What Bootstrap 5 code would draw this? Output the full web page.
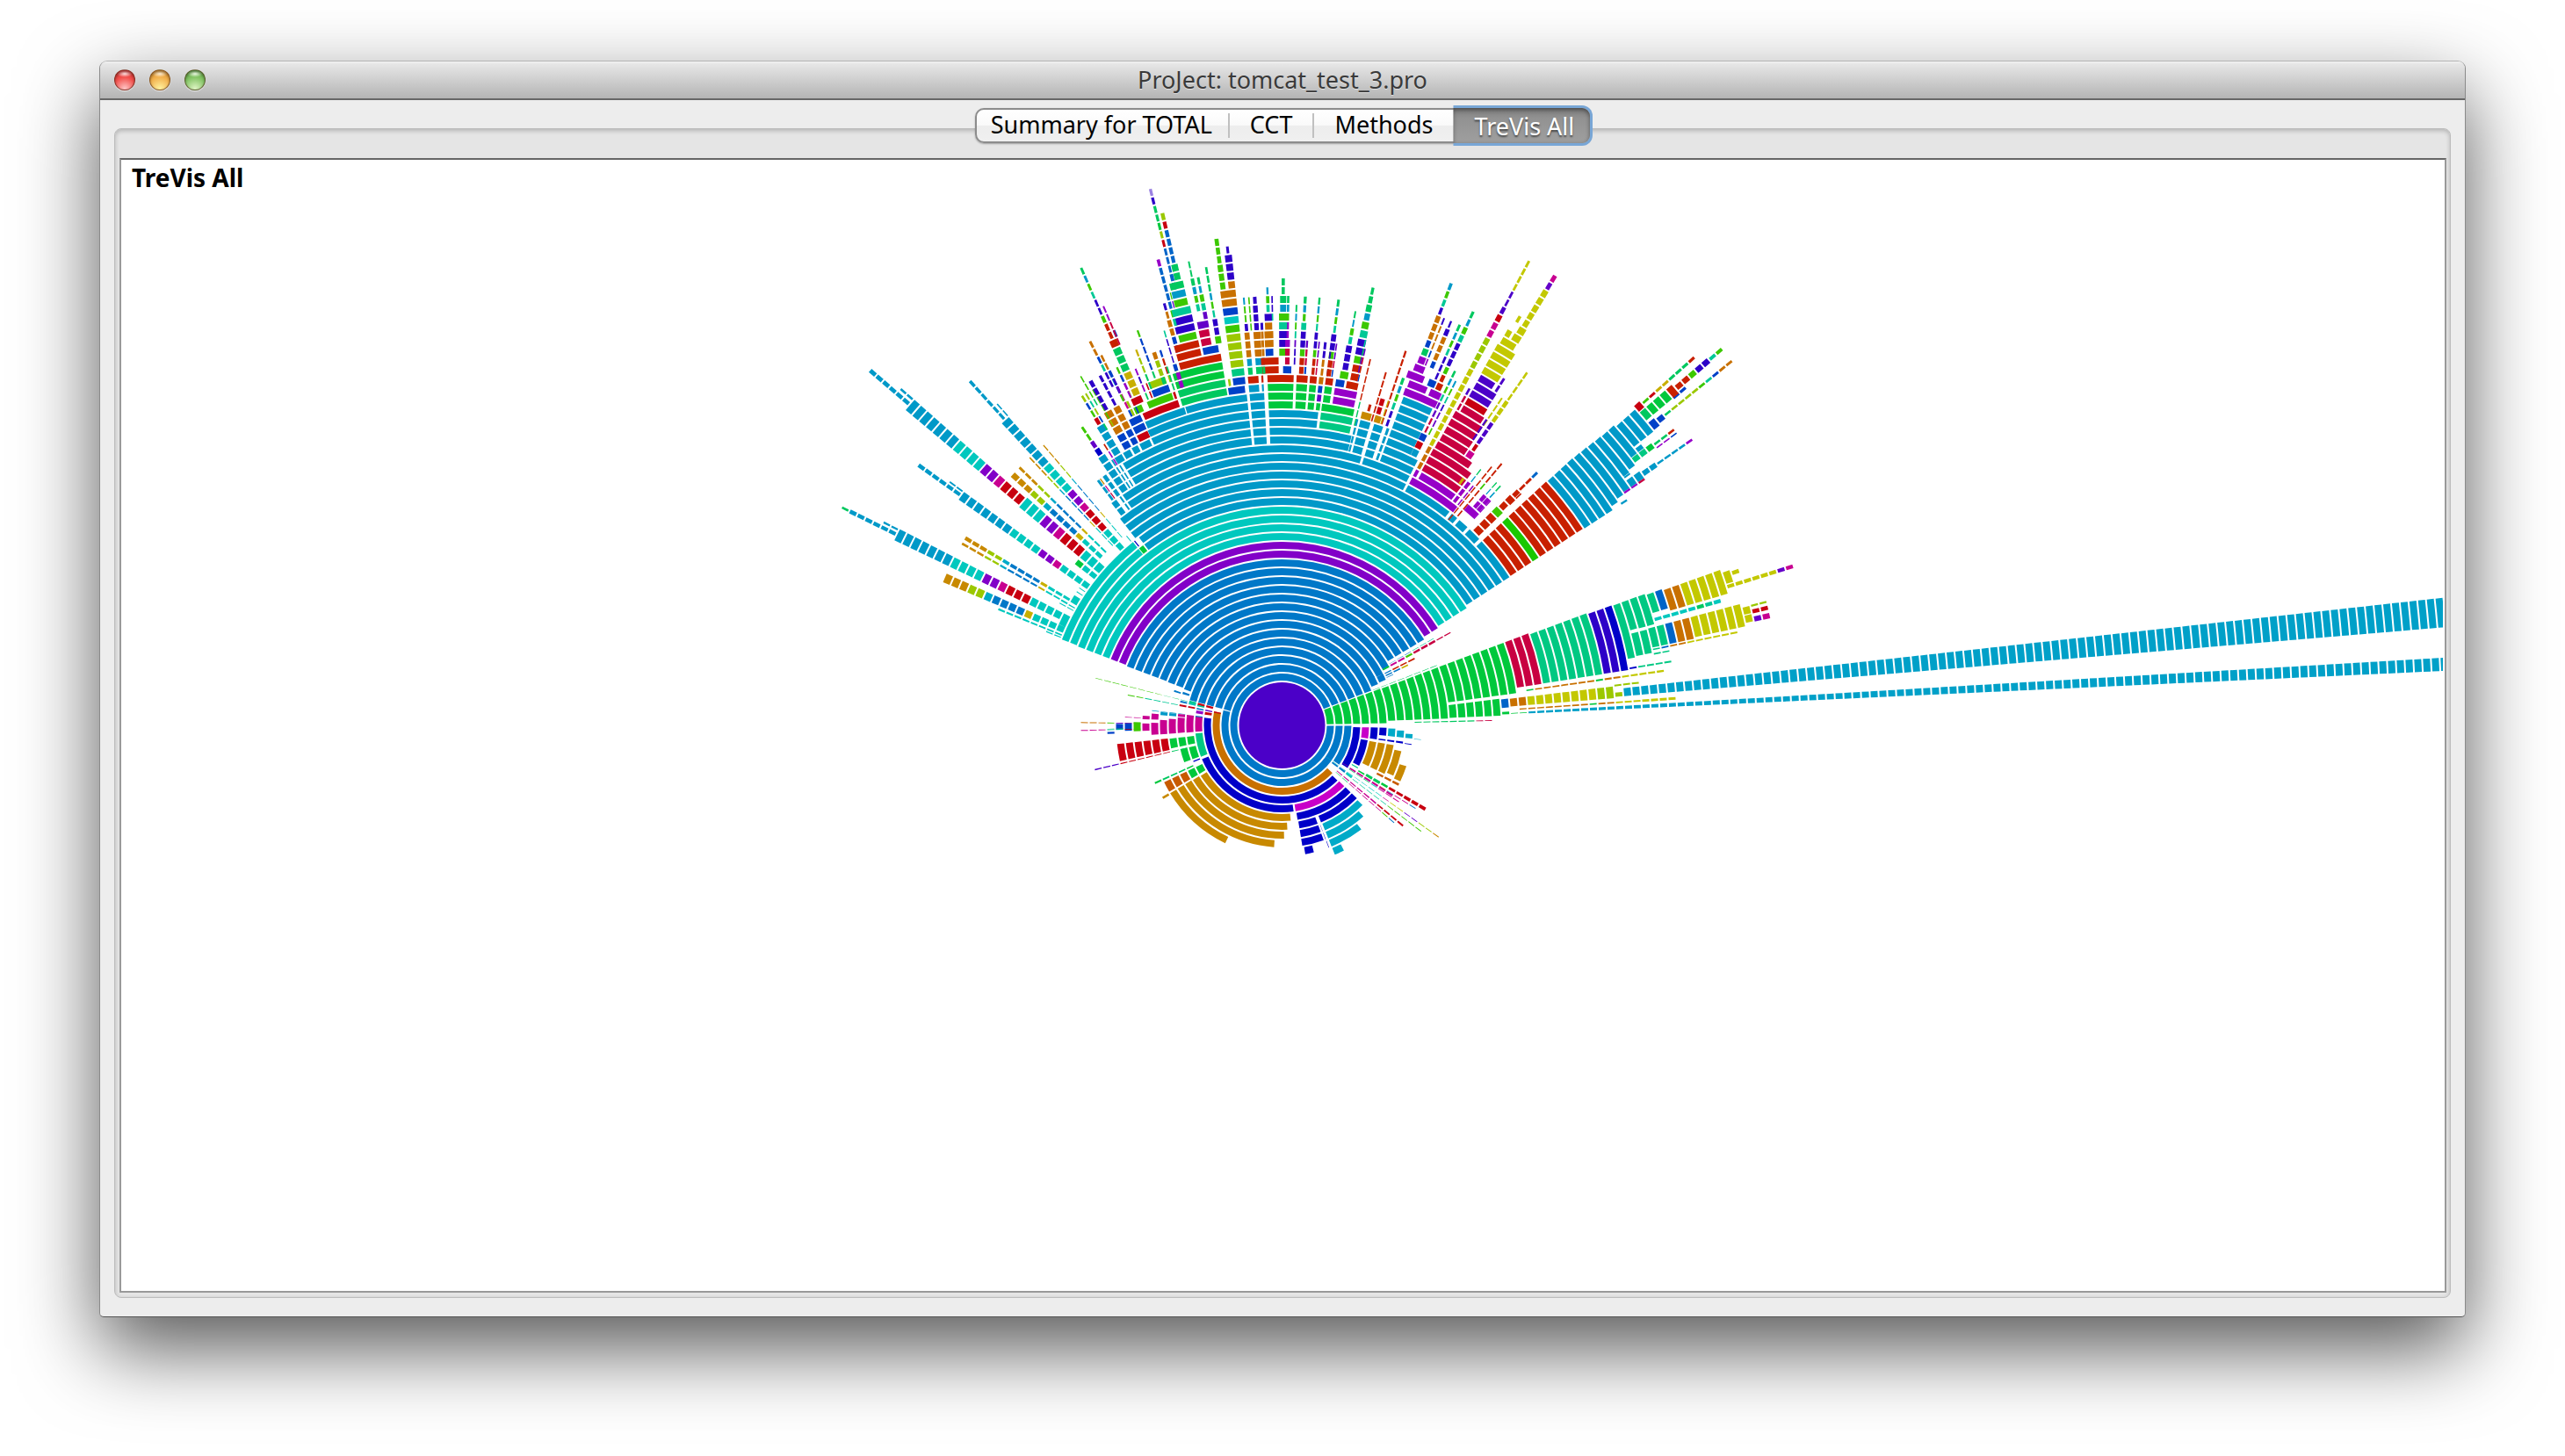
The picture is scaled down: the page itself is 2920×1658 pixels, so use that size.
<!DOCTYPE html>
<html lang="en">
<head>
<meta charset="utf-8">
<meta name="viewport" content="width=device-width, initial-scale=1">
<title>ProJect: tomcat_test_3.pro</title>
<link href="https://cdn.jsdelivr.net/npm/bootstrap@5.3.0/dist/css/bootstrap.min.css" rel="stylesheet">
<style>
body { font-family: "Noto Sans", "Open Sans", sans-serif; font-size: 27px; line-height: 36px; color: #000; background: #fff; }
.desktop-area { min-height: 100vh; padding: 69px 113px 158px; overflow: hidden; }
.app-window { background: #ededed; border: 1px solid #8a8a8a; border-top-color: #b4b4b4; border-bottom-color: #555; border-radius: 9px 9px 5px 5px; box-shadow: 0 36px 90px rgba(0,0,0,.66); }
.title-bar { height: 44px; padding: 0 16px; background: linear-gradient(#f2f2f2 0, #e6e6e6 3px, #b4b4b4 100%); border-bottom: 2px solid #666; border-radius: 8px 8px 0 0; display: grid; grid-template-columns: 1fr auto 1fr; }
.title-text { font-size: 27px; line-height: 36px; font-weight: 400; color: #3a3a3a; text-shadow: 0 1px 0 rgba(255,255,255,.5); }
.light { width: 24px; height: 24px; border-radius: 50%; padding: 0; border: 1px solid rgba(60,20,0,.55); box-shadow: 0 1px 1px rgba(255,255,255,.7), inset 0 2px 3px rgba(0,0,0,.35); }
.light-close { background: radial-gradient(ellipse 9px 4px at 50% 18%, #ffe4e4, transparent), radial-gradient(circle at 50% 95%, #ffc6c6 0, #f2504c 55%, #d8312f 100%); }
.light-min { background: radial-gradient(ellipse 9px 4px at 50% 18%, #fff0d8, transparent), radial-gradient(circle at 50% 95%, #fff3a0 0, #f2b14e 55%, #d98b25 100%); }
.light-max { background: radial-gradient(ellipse 9px 4px at 50% 18%, #effbe6, transparent), radial-gradient(circle at 50% 95%, #dff5c4 0, #84c465 55%, #58a03c 100%); }
.window-body { padding: 9px 16px 21px; }
.tab-strip { position: relative; z-index: 2; margin-bottom: -17px; }
.seg { height: 40px; border: 2px solid #8c8c8c; border-radius: 10px; background: linear-gradient(#fff 0, #fafafa 48%, #ededed 52%, #f0f0f0 100%); box-shadow: 0 1px 2px rgba(0,0,0,.3); }
.seg .nav-link { font-size: 27px; line-height: 34px; padding: 0 18px 0 16px; color: #000; border: 0; background: none; border-radius: 0; position: relative; }
.seg .nav-item + .nav-item .nav-link:not(.active)::before { content: ""; position: absolute; left: 0; top: 4px; bottom: 2px; border-left: 2px solid #c0c0c0; }
.seg .tab-mid { padding: 0 23px 0 25px; }
.seg .nav-link.active { color: #fff; background: linear-gradient(#7d7d7d, #929292 30%, #9f9f9f); height: 40px; margin: -2px -2px 0 0; padding: 1px 18px 0 24px; border-radius: 0 9px 9px 0; text-shadow: 0 2px 2px rgba(0,0,0,.55); box-shadow: 0 0 0 3px #78a6d6, inset 0 2px 5px rgba(0,0,0,.45); clip-path: inset(-4px -4px -4px 0); }
.tab-panel { border: 1px solid #bcbcbc; border-radius: 8px; background: #e5e5e5; box-shadow: inset 0 2px 5px rgba(0,0,0,.22); padding: 33px 4px 5px 5px; }
.chart-frame { background: #fff; border: 2px solid #999; border-top-color: #666; padding-right: 2px; }
.chart-title { position: absolute; left: 12px; top: 2px; font-size: 28px; font-weight: 700; margin: 0; line-height: 36px; }
.chart-svg { position: absolute; inset: 0 2px 0 0; width: calc(100% - 2px); height: 100%; }
</style>
</head>
<body>
<main class="desktop-area d-flex">
  <div class="app-window d-flex flex-column flex-grow-1">
    <header class="title-bar align-items-center">
      <div class="d-flex" style="gap:16px">
        <button type="button" class="light light-close" aria-label="Close"></button>
        <button type="button" class="light light-min" aria-label="Minimize"></button>
        <button type="button" class="light light-max" aria-label="Zoom"></button>
      </div>
      <h1 class="title-text m-0">ProJect: tomcat_test_3.pro</h1>
      <span></span>
    </header>
    <div class="window-body d-flex flex-column flex-grow-1">
      <div class="tab-strip d-flex justify-content-center">
        <ul class="seg nav flex-nowrap" role="tablist">
          <li class="nav-item" role="presentation"><button type="button" class="nav-link" role="tab">Summary for TOTAL</button></li>
          <li class="nav-item" role="presentation"><button type="button" class="nav-link tab-mid" role="tab">CCT</button></li>
          <li class="nav-item" role="presentation"><button type="button" class="nav-link tab-mid" role="tab">Methods</button></li>
          <li class="nav-item" role="presentation"><button type="button" class="nav-link active" role="tab" aria-selected="true" aria-controls="trevis">TreVis All</button></li>
        </ul>
      </div>
      <section class="tab-panel d-flex flex-grow-1" id="trevis" role="tabpanel">
        <div class="chart-frame position-relative flex-grow-1">
          <svg class="chart-svg" role="img" aria-label="Calling context ring chart"><svg x="50%" y="50%" overflow="visible"><g id="rings"></g></svg></svg>
          <h2 class="chart-title">TreVis All</h2>
        </div>
      </section>
    </div>
  </div>
</main>
<script src="https://cdn.jsdelivr.net/npm/bootstrap@5.3.0/dist/js/bootstrap.bundle.min.js"></script>
<script>
const INK = { v:'#4b00c8', V:'#2d00c8', d:'#0000c8', D:'#0041c8', e:'#0064c8', B:'#0078c8', c:'#0099c8', C:'#00aac8',
  t:'#00c8be', T:'#00c896', j:'#00c882', G:'#00c85f', g:'#00c83c', L:'#3cc800', k:'#19c800', y:'#c3c800', Y:'#9bc800',
  h:'#c8af00', o:'#c88900', O:'#c87000', R:'#c82000', r:'#c80010', m:'#c80041', M:'#c80091', P:'#c800c8', p:'#9600c8',
  u:'#8200c8', w:'#6400c8', q:'#9b82e1', F:'#00a0c8', N:'#c85a00' };
const HUB = 50, STEP = 10, RAD = Math.PI / 180;
const byInk = {};
// one ring cell; angles in radians, counter-clockwise from east
function cell(a0, a1, ring, ink, inset) {
  const r0 = HUB + ring * STEP + 1, r1 = r0 + STEP - 2;
  const p = (r, a) => (r * Math.cos(a)).toFixed(2) + ' ' + (-r * Math.sin(a)).toFixed(2);
  const i0 = inset / r0, i1 = inset / r1, big = a1 - a0 > Math.PI ? 1 : 0;
  (byInk[ink] = byInk[ink] || []).push(`M${p(r0, a0 + i0)}A${r0} ${r0} 0 ${big} 0 ${p(r0, a1 - i0)}L${p(r1, a1 - i1)}A${r1} ${r1} 0 ${big} 1 ${p(r1, a0 + i1)}Z`);
}
function unroll(s) { return s.replace(/([A-Za-z])(\d+)/g, (_, c, n) => c.repeat(+n)); }
// bands: [from degrees, to degrees, first ring, inks outwards]
function bands(list) {
  for (const [a0, a1, k, s] of list) [...unroll(s)].forEach((c, i) => cell(a0 * RAD, a1 * RAD, k + i, c, .6));
}
// spikes: [tip x, tip y, width, inks inwards, width, inks, ...] on the sector's own grid, hub at (cx, cy)
function spikes(cx, cy, sx, sy, list) {
  for (const [x, y, ...parts] of list) {
    const dx = (x - cx) / sx, dy = (cy - y) / sy, a = Math.atan2(dy, dx);
    let k = Math.floor((Math.hypot(dx, dy) - HUB) / STEP);
    for (let i = 0; i < parts.length; i += 2) {
      const half = parts[i] / 6 / (HUB + STEP * (k + .5));
      for (const c of unroll(parts[i + 1])) cell(a - half, a + half, k--, c, 0);
    }
  }
}
bands([
  [21,360,0,'B'],[21,165,1,'B5'],[165,360,1,'B'],[23,160,6,'B'],[27.5,159.5,7,'B'],[28.5,159.5,8,'B'],[31,159.3,9,'B5'],
  [23.5,26.8,7,'B'],[31.8,159,14,'u2'],[32.3,159,16,'t4'],[129,158.8,20,'t2'],[33,127.4,20,'c2'],[33,128.2,22,'c3'],
  [-35,0,2,'B'],[168,317,2,'O'],[174,315.5,3,'d'],[-33.5,-1,3,'d'],
  [185,201.5,4,'j'],[202.5,278,4,'d'],[278.6,316,4,'P'],
  [211.5,275.5,5,'o'],[211.2,273.2,6,'o'],[211,271.3,7,'o'],[211,266.5,8,'o'],[211,244.5,9,'o'],
  [279,316,5,'d'],[279.3,290.2,6,'d3'],[280,284.3,9,'d'],[290.6,291.3,7,'d3'],[291.6,316,6,'d'],
  [292,315.5,7,'C'],[292,312,8,'C'],[292,307.5,9,'C'],[292,296.5,10,'C'],
  [-9,-1,4,'P'],[-28,-9.6,4,'d'],[-8.8,-1,5,'d'],[-25.6,-9.8,5,'o3'],[-6,-1,6,'d'],[-6,-1.4,7,'C'],[-6,-2.2,8,'C'],[-6,-3.6,9,'C'],
  [-24.6,-12,8,'o'],[-25.6,-18,9,'o'],[-8.8,-7.4,6,'d3'],[-8.8,-8,9,'d'],[-6.2,-5.6,10,'C'],[-30,-28.6,4,'j'],
  [174,184.6,4,'M'],[174,184.6,5,'M'],[175.4,184.5,6,'M'],[176.4,184.5,7,'M'],[177.2,184.5,8,'M'],
  [174.6,177.6,9,'M'],[178.6,184.4,9,'M'],[175.8,177.7,10,'M'],[179,182.5,10,'M'],[178.5,182.5,11,'L'],[179,182.2,12,'D'],[179.3,181.7,13,'D'],[182,183,14,'D'],
  [176.7,177.3,11,'M2'],[186.5,192,5,'g3'],[193,201,5,'g2'],[186.3,192.6,8,'r6'],[205.5,210.7,5,'g2N3'],
  [161,162.8,6,'B'],[161.6,163,7,'B'],
  /* east wedge */
  [.8,21,0,'g5'],[.9,20.8,5,'g2'],[2.2,20.6,7,'g7'],[7.7,20.6,14,'g8'],[2.4,7.1,14,'g6'],[9,20.6,22,'m3'],[9,20.3,25,'j7'],[9,20.1,32,'V2d'],
  [10.8,20,35,'j'],[15.2,20,36,'j3'],[16.8,19.8,39,'je'],[16.4,19.6,41,'O2y5'],[17.6,19.2,48,'y'],[18.4,19,49,'y'],
  [11,14.8,36,'j2'],[11.8,14.9,38,'j2eO2'],[12,14.9,43,'y6'],[12.4,13.4,49,'y'],[13.4,14.4,49,'y'],
  [4.4,6.9,20,'e'],[4.6,6.8,21,'O2y8Y2'],[4.8,5.7,33,'Y'],[4.8,6.3,34,'F98'],[2.66,3.36,23,'F109'],[2.7,3.6,20,'g'],[2.8,3.2,21,'g2'],
  /* north-east wedge */
  [33,42.8,25,'c'],[33.1,42.8,26,'R3kR6'],[33,42.7,36,'c4'],[33.9,42.6,40,'c'],[34.4,42.5,41,'c'],[35.3,42.4,42,'c'],[36,42.3,43,'c'],[37.6,42.2,44,'c2'],[38.3,41.9,46,'c3'],
  [43.3,46.4,25,'c'],[46.8,49.3,25,'c'],[49.7,51.4,25,'c'],[51.8,62.4,25,'c'],[62.7,124.8,25,'c'],
  [51.4,62.4,26,'p'],[53,61.2,27,'p'],[53,61.4,28,'m3'],[54,61.3,31,'m'],[56,61.2,32,'m4'],[56.6,60.5,36,'m'],[56.9,60.5,37,'r'],[57,60.5,38,'v2'],[58,60.5,40,'v'],
  [57.8,60.6,41,'y4'],[58.3,60.4,45,'y'],[59.6,60.4,46,'y'],[58.3,59.4,46,'y'],
  /* crown */
  [62.8,73.1,26,'c'],[73.4,124.8,26,'c'],[62.8,69.8,27,'c2'],[64.5,69.8,29,'c6'],[64.2,70,35,'p'],[66.6,69.8,36,'p'],[64.2,66.2,36,'p'],
  [76.4,92.5,27,'c2'],[83.3,92.5,29,'c2'],[76.9,83,29,'j2'],[77,83,31,'g'],[77.2,81.2,32,'p2'],[77.3,79.4,34,'R'],[79.6,81.2,34,'D'],
  [88,92.5,31,'g3R'],[85.7,87.7,31,'g3R'],[84.2,85.5,31,'g3R'],[83.1,84,31,'gwDO'],[81.5,82.9,32,'g2R'],
  [93,95.7,27,'c6'],[93.8,95.7,33,'cR'],[93,93.5,33,'cR'],[96,121.4,27,'c3'],[96,114.6,30,'c2'],[96,107,32,'c'],[107,114.4,32,'c'],
  [107.8,114.2,33,'r'],[113.6,115.2,34,'L'],[108.3,112.8,34,'L'],[113.2,114.9,35,'r'],[108.4,111.4,35,'D'],[108.5,111.2,36,'Y'],
  [99.3,107.4,33,'G2g2'],[99.3,106,37,'R'],[102.2,106,38,'R2'],[99.5,102,38,'D'],[100.4,102,39,'m2'],[98.9,99.9,39,'L'],[102.3,105,40,'LV2T'],[100.3,102,41,'w'],
  [102.5,104.4,44,'LcG'],[96.2,99.2,33,'D'],
  [73.6,75.7,27,'c4'],[71.2,73.1,27,'c4'],[70,70.7,27,'c4'],[75.9,76.5,27,'c4'],
  [121.7,122.2,27,'c4'],[122.4,122.9,27,'c4'],[125,125.6,25,'c3'],[114.8,117,30,'c'],[117.2,118.6,30,'c'],[118.8,120.4,30,'c']
]);
/* crown spikes */
spikes(900, 1879.5, 3, 3, [
  [217,324,9,'GcLTV2',12,'LR2',27,'RG3h3r'],[452,55,10,'qVG2gYreee',12,'e2'],[493,138,13,'Yr',13,'e4',22,'G2'],[479,297,11,'pe5LTV'],[500,447,9,'VO',14,'O2DV'],
  [583,303,6,'G2',12,'GcLT'],[615,358,9,'Gc',14,'LTw'],[642,323,8,'G3cLT',16,'V2L'],[677,227,14,'L3',18,'L3'],[716,404,52,'O2DtLY4jD'],[714,253,9,'V',24,'V3O'],
  [770,428,6,'cL2',11,'V',17,'O3cG'],[787,425,5,'L4'],[807,425,12,'V',16,'V3',24,'O3cG'],[831,515,9,'VO3cG'],
  [850,394,7,'c',11,'LT',25,'VO',30,'O2',26,'D',60,'R2'],[866,425,5,'V2T'],[904,364,11,'G2',21,'Gc',28,'LTVVL'],[921,425,8,'GcLp2',16,'pm2',28,'D'],
  [949,455,6,'GcLTwV2'],[979,425,10,'GcL',17,'TV2LR2'],[985,578,7,'wm2D'],[1027,430,7,'GcLT',11,'V2LR2'],[1026,580,5,'w2m2'],
  [1092,435,9,'GcLT',17,'V2LR2'],[1047,580,9,'V2O3'],[1068,580,6,'V2RD'],[1085,585,5,'w2mD'],[1149,475,6,'Gc',12,'LT',20,'V3',28,'L'],
  [1209,393,10,'G',14,'G',19,'Gc',24,'LT',28,'V2LR2'],[1190,540,5,'T2Gw2m'],[1200,635,5,'R5G3'],[1180,610,5,'wmRD'],[1253,680,5,'R6'],[1320,605,5,'R8'],
  [1188,820,34,'o'],[1227,832,22,'o'],[1198,795,9,'R'],[1241,775,15,'r2'],
  [217,695,5,'L3G'],[248,575,9,'O2DTV2'],[250,710,14,'V4',28,'O3D2'],[281,690,10,'V4',22,'O3D2'],[317,680,8,'DVwM2D2'],[340,665,7,'LDp2r'],
  [400,836,42,'D2r'],[405,605,7,'hY2G2'],[410,540,7,'LD4GY'],[465,612,14,'OY2G'],[487,607,7,'DR2Y'],[403,670,6,'pVpGL'],
  [222,868,9,'L2',14,'w',18,'d',26,'c5'],[222,762,8,'YDL',14,'r',26,'c5'],[235,755,6,'YTYDG'],[285,620,8,'O2DcVL'],[293,455,6,'p2m3'],[330,540,9,'D'],[255,735,5,'L4Y'],
  [358,700,6,'DpYD3'],[372,775,8,'Y2D'],[296,925,5,'Rp2'],[500,540,5,'TV3L2'],[518,400,4,'Lw'],[536,656,13,'D'],[547,685,14,'p2'],[532,745,8,'r2'],[510,665,6,'G3'],[440,720,5,'r2'],[720,705,8,'Y']
]);
/* north-east spikes */
spikes(-300, 1699.5, 3, 3, [
  [275,197,11,'cLTV',16,'O3D',20,'G',24,'p',32,'p',60,'p'],[250,318,6,'VO3Dp2'],[275,325,7,'V',15,'VO3D'],[212,530,26,'D'],[238,540,20,'RL'],[303,340,9,'GcLTV3'],
  [350,293,10,'Gc',15,'LTV3LR'],[288,495,8,'GcLTw2m2',22,'Drc'],[290,530,6,'cLTVw2L'],[112,520,10,'GcLTV2'],[120,430,6,'R9'],[53,500,6,'R6'],[40,595,14,'r2'],[27,655,20,'o'],[60,600,4,'h3'],
  [540,120,9,'y4v2',14,'v',18,'rM2',18,'Y4y10O3p'],[630,168,15,'Mw',20,'y5',26,'y2'],[510,307,11,'y'],[450,583,6,'y4'],[535,497,8,'y4',14,'y3v3r',22,'M',30,'M'],
  [455,520,9,'v3'],[395,660,7,'v3rM2'],[337,555,8,'vm6'],[313,865,9,'h'],[375,830,4,'GcR4'],[413,820,5,'R8'],[448,808,6,'R3LR4'],[430,873,4,'Gc',14,'p2',44,'p'],[440,888,5,'Gc',14,'p3'],[335,875,12,'p4'],[350,885,5,'p4'],
  [410,935,4,'p3'],[567,840,9,'eR2',16,'R',22,'R2',30,'LR3'],[512,912,5,'R2'],
  [1105,445,10,'RG3h2rL',26,'r'],[1195,420,12,'LT',20,'V2LR2',38,'Rg3G'],[1230,460,9,'O2DTLY4G',20,'D',32,'D'],[1070,553,10,'D2'],
  [1035,692,8,'RG2',20,'gj2',34,'c2'],[1042,705,5,'Dp2'],[1095,727,8,'pc4',18,'c2',28,'c4'],[932,862,7,'mp2c',28,'c'],[870,935,7,'c'],[925,750,16,'c2'],[883,843,6,'c']
]);
/* north-west spikes */
spikes(1560, 1279.5, 3, 3, [
  [160,73,15,'c6',46,'c7t4u2Mr3',42,'t3u2Mr3t3'],[263,135,8,'c2'],[497,107,11,'c6',32,'c7t4u2Mr3t3'],[590,185,5,'c2'],[325,395,14,'c6',32,'c7t4u2Mt4'],[432,453,6,'c2'],
  [67,540,8,'G',14,'c6',42,'c7t4u2Mr3t5'],[207,590,7,'c2'],[418,780,31,'o3Y2CB4ht4'],[597,885,7,'t8'],[487,645,13,'o3Y2CB4ht3'],[475,663,8,'o3Y2CB4ht3'],
  [648,430,20,'o3Y2CB4ht3'],[670,405,9,'o3Y2CB4ht3'],[705,372,5,'o3Y2CB4ht3'],[750,328,4,'o3Y2CB4ht3'],[866,727,19,'gt2'],[1085,678,17,'g'],[1062,657,4,'d'],
  [820,930,26,'t'],[770,965,4,'t2'],[810,855,4,'t2'],[812,868,3,'t2'],[875,815,3,'t'],[870,830,3,'t'],[1035,640,3,'t'],[850,850,26,'t'],
  [935,447,9,'c3',20,'c2'],[957,432,14,'c3'],[945,445,4,'oMm'],[1050,720,4,'t']
]);
/* hub spikes */
spikes(720, 319.5, 3, 3, [
  [1208,605,12,'r3',9,'r2',8,'gG2'],[1130,660,6,'r4M6'],[1253,700,3,'oYYwwyyMt8'],[1193,680,3,'L5T6'],[1175,603,3,'BMMtrM5'],[1115,520,8,'N3'],[1110,575,3,'M3tG3'],[1100,650,3,'BLM5G2'],[1040,510,6,'g3'],[1075,545,6,'M6'],[950,490,7,'tB2'],
  [90,160,2,'L8G2T2',8,'r2'],[200,217,3,'L2T4',6,'r2Bwr'],[35,310,3,'O3LwMM'],[35,337,3,'M3TTrM'],[130,332,2,'G2'],[285,270,2,'c4'],[315,280,10,'c2',9,'M2B'],[385,241,6,'BtT'],[410,241,9,'T'],[437,275,10,'pr'],
  [85,470,4,'v3r6G2'],[290,515,6,'gGGGg'],[325,560,8,'o'],[430,438,4,'d'],
  [1285,8,4,'m2',8,'m3LM2g'],[1230,27,2,'T3B3'],[1165,95,5,'R3B2'],[1140,118,5,'hB2'],[1060,142,6,'BB'],[1240,118,2,'G8'],[1090,150,2,'B2']
]);
/* east spikes */
spikes(-108, 619.5, 2.703, 3, [
  [1453,80,13,'Mw',13,'y6'],[1232,197,13,'tTGt5'],[1375,200,7,'Y2'],[1378,220,14,'r2'],[1382,247,18,'Mw'],[1285,303,6,'y6O2ejj'],[1075,367,5,'j2'],[1080,403,6,'j4d'],[1055,435,7,'y5O2gO7g'],
  [980,475,6,'Y3'],[1095,528,9,'y4',6,'y3O2gO8'],[530,603,3,'m2',4,'G7'],[970,512,3,'y2'],[1035,272,5,'j2']
]);
const g = document.getElementById('rings');
let out = `<circle r="49" fill="${INK.v}"/>`;
for (const k in byInk) out += `<path fill="${INK[k]}" d="${byInk[k].join('')}"/>`;
g.innerHTML = out;
</script>
</body>
</html>
